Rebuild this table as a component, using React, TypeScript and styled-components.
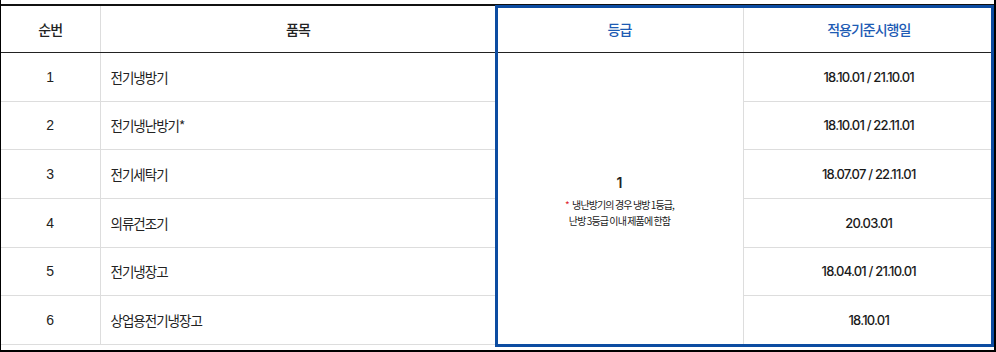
import styled, { createGlobalStyle } from 'styled-components';

interface RowData {
  no: number;
  name: string;
  date: string;
}

const rows: RowData[] = [
  { no: 1, name: '전기냉방기', date: '18.10.01 / 21.10.01' },
  { no: 2, name: '전기냉난방기*', date: '18.10.01 / 22.11.01' },
  { no: 3, name: '전기세탁기', date: '18.07.07 / 22.11.01' },
  { no: 4, name: '의류건조기', date: '20.03.01' },
  { no: 5, name: '전기냉장고', date: '18.04.01 / 21.10.01' },
  { no: 6, name: '상업용전기냉장고', date: '18.10.01' },
];

const App = () => {
  return (
    <>
      <GlobalStyle />
      <Frame>
        <TableWrap>
          <Table>
            <colgroup>
              <col style={{ width: 99 }} />
              <col style={{ width: 396 }} />
              <col style={{ width: 247 }} />
              <col />
            </colgroup>
            <thead>
              <tr>
                <HeadCell>순번</HeadCell>
                <HeadCell>품목</HeadCell>
                <HeadCell $blue>등급</HeadCell>
                <HeadCell $blue>적용기준시행일</HeadCell>
              </tr>
            </thead>
            <tbody>
              {rows.map((row, index) => (
                <tr key={row.no}>
                  <NoCell>{row.no}</NoCell>
                  <NameCell>{row.name}</NameCell>
                  {index === 0 && (
                    <GradeCell rowSpan={rows.length}>
                      <GradeValue>1</GradeValue>
                      <GradeNote>
                        <Star>*</Star> 냉난방기의 경우 냉방 1등급,
                        <br />
                        난방 3등급 이내 제품에 한함
                      </GradeNote>
                    </GradeCell>
                  )}
                  <DateCell>{row.date}</DateCell>
                </tr>
              ))}
            </tbody>
          </Table>
          <Highlight />
        </TableWrap>
      </Frame>
    </>
  );
};

const GlobalStyle = createGlobalStyle`
  html, body {
    margin: 0;
    padding: 0;
    background: #fff;
  }
  body {
    font-family: "Noto Sans CJK KR", "Noto Sans", sans-serif;
    color: #222;
  }
`;

const Frame = styled.div`
  width: 996px;
  height: 352px;
  box-sizing: border-box;
  padding-top: 4px;
  border-left: 1px solid #000;
  border-right: 2px solid #000;
  border-bottom: 2px solid #000;
  overflow: hidden;
`;

const TableWrap = styled.div`
  position: relative;
  width: 993px;
`;

const Table = styled.table`
  width: 100%;
  border-collapse: collapse;
  table-layout: fixed;
  border-top: 2px solid #111;
`;

const HeadCell = styled.th<{ $blue?: boolean }>`
  height: 46px;
  padding: 0;
  font-size: 14px;
  font-weight: 500;
  letter-spacing: -1px;
  color: ${({ $blue }) => ($blue ? '#1d5bb4' : '#222')};
  text-align: center;
  border-bottom: 1px solid #222;
  border-left: 1px solid #ddd;
  &:first-child {
    border-left: none;
  }
`;

const BodyCell = styled.td`
  height: 47.67px;
  padding: 0;
  border-bottom: 1px solid #ddd;
  border-left: 1px solid #ddd;
  font-size: 13px;
  color: #222;
`;

const NoCell = styled(BodyCell)`
  border-left: none;
  text-align: center;
  font-family: "Liberation Sans", Arial, sans-serif;
  font-size: 14px;
`;

const NameCell = styled(BodyCell)`
  padding-left: 10px;
  font-size: 13.5px;
  letter-spacing: -1px;
`;

const GradeCell = styled(BodyCell)`
  text-align: center;
  vertical-align: middle;
  padding-top: 6px;
`;

const GradeValue = styled.div`
  font-family: "Inter", sans-serif;
  font-size: 14px;
  font-weight: 600;
  margin-bottom: 6px;
`;

const GradeNote = styled.div`
  font-size: 10px;
  line-height: 16px;
  letter-spacing: -0.9px;
  color: #222;
`;

const Star = styled.span`
  color: #e0232e;
  margin-right: 2px;
`;

const DateCell = styled(BodyCell)`
  text-align: center;
  font-family: "Inter", sans-serif;
  font-size: 13px;
  font-weight: 500;
  letter-spacing: -0.8px;
  color: #1a1a1a;
`;

const Highlight = styled.div`
  position: absolute;
  left: 494px;
  top: 1px;
  width: 499px;
  height: 342px;
  box-sizing: border-box;
  border: 3px solid #0c4ca1;
  pointer-events: none;
`;

export default App;
